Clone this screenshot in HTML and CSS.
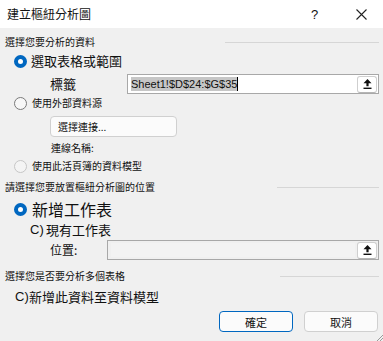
FILE: index.html
```html
<!DOCTYPE html>
<html lang="zh-Hant">
<head>
    <meta charset="UTF-8">
    <title>建立樞紐分析圖</title>
    <link rel="stylesheet" href="styles.css">
</head>
<body>
    <div class="dialog">
        <div class="titlebar">
            <span class="title">建立樞紐分析圖</span>
            <span class="help">?</span>
            <span class="close">
                <svg width="11" height="11" viewBox="0 0 11 11"><path d="M0.5 0.5L10.5 10.5M10.5 0.5L0.5 10.5" stroke="#222" stroke-width="1.1"/></svg>
            </span>
        </div>

        <div class="content">
            <div class="heading h1"><span>選擇您要分析的資料</span><i class="line line1"></i></div>

            <div class="row r1 big">
                <span class="radio on"></span><span class="rtext">選取表格或範圍</span>
            </div>
            <div class="row field f1">
                <span class="flabel">標籤</span>
                <div class="input">
                    <span class="value"><span class="sel">Sheet1!$D$24:$G$35</span><span class="caret"></span></span>
                    <span class="pick">
                        <svg width="9" height="10" viewBox="0 0 9 10"><path d="M4.5 0L8.5 4.2H5.6V7.2H3.4V4.2H0.5Z" fill="#111"/><rect x="0.5" y="8.6" width="8" height="1.4" fill="#111"/></svg>
                    </span>
                </div>
            </div>
            <div class="row r2 small">
                <span class="radio"></span><span class="rtext">使用外部資料源</span>
            </div>
            <div class="row connrow">
                <button class="connbtn">選擇連接...</button>
            </div>
            <div class="row conname">連線名稱:</div>
            <div class="row r3 small">
                <span class="radio off"></span><span class="rtext">使用此活頁簿的資料模型</span>
            </div>

            <div class="heading h2"><span>請選擇您要放置樞紐分析圖的位置</span><i class="line line2"></i></div>

            <div class="row r4 huge">
                <span class="radio on"></span><span class="rtext">新增工作表</span>
            </div>
            <div class="row r5 mid">
                <span class="cmark">C)</span><span class="rtext">現有工作表</span>
            </div>
            <div class="row field f2">
                <span class="flabel">位置:</span>
                <div class="input dis">
                    <span class="value"></span>
                    <span class="pick">
                        <svg width="9" height="10" viewBox="0 0 9 10"><path d="M4.5 0L8.5 4.2H5.6V7.2H3.4V4.2H0.5Z" fill="#111"/><rect x="0.5" y="8.6" width="8" height="1.4" fill="#111"/></svg>
                    </span>
                </div>
            </div>

            <div class="heading h3"><span>選擇您是否要分析多個表格</span><i class="line line3"></i></div>

            <div class="row r6 mid">
                <span class="cmark2">C)</span><span>新增此資料至資料模型</span>
            </div>

            <div class="buttons">
                <button class="btn primary">確定</button>
                <button class="btn">取消</button>
            </div>
        </div>

        <svg class="grip" width="7" height="7" viewBox="0 0 7 7"><path d="M7 1L1 7M7 4L4 7" stroke="#9a9a9a" stroke-width="1"/></svg>
    </div>
</body>
</html>
```

FILE: styles.css
```css
*{
    padding: 0;
    margin: 0;
    box-sizing: border-box;
}
body{
    width: 383px;
    height: 341px;
    overflow: hidden;
    background: #f0f0f0;
    font-family: "Noto Sans CJK TC", "Noto Sans", sans-serif;
    color: #111;
}
.dialog{
    width: 383px;
    height: 341px;
    position: relative;
    background: #f0f0f0;
}
.titlebar{
    height: 28px;
    background: #fff;
    display: flex;
    align-items: center;
    padding-left: 7px;
}
.title{
    font-size: 12px;
    line-height: 16px;
    flex: 1;
}
.help{
    font-family: "Liberation Sans", sans-serif;
    font-size: 13px;
    width: 8px;
    margin-right: 37px;
}
.close{
    display: flex;
    width: 11px;
    margin-right: 16px;
}
.content{
    padding: 0 4px 0 5px;
}
.heading{
    display: flex;
    align-items: center;
    height: 18px;
    font-size: 10px;
    line-height: 14px;
}
.line{
    margin-left: auto;
    height: 1px;
    background: #d6d6d6;
}
.line1{ width: 154px; }
.line2{ width: 102px; }
.line3{ width: 99px; }
.h1{ margin-top: 5px; }
.h2{ margin-top: 3px; }
.h3{ margin-top: 7px; }

.row{
    display: flex;
    align-items: center;
}
.radio{
    width: 13px;
    height: 13px;
    border-radius: 50%;
    border: 1px solid #7a7a7a;
    background: #f7f7f7;
    margin-left: 9px;
    flex: none;
}
.radio.on{
    border: 4px solid #0067c0;
    background: #fff;
}
.radio.off{
    border-color: #c6c6c6;
    background: #f4f4f4;
}
.r1{ height: 20px; }
.r1 .rtext{ font-size: 13px; line-height: 18px; margin-left: 4px; }
.small .rtext{ font-size: 10px; line-height: 14px; margin-left: 5px; }
.r2{ height: 14px; margin-top: 2px; }
.r3{ height: 18px; margin-top: 1px; }
.r4{ height: 22px; margin-top: 2px; }
.r4 .rtext{ font-size: 16px; line-height: 22px; margin-left: 5px; }
.r5{ height: 16px; margin-top: 2px; }
.cmark{
    font-family: "Liberation Sans", sans-serif;
    font-size: 13px;
    line-height: 16px;
    margin-left: 25px;
    width: 16px;
}
.mid .rtext{ font-size: 13px; line-height: 16px; }
.r6{ height: 20px; margin-top: 2px; font-size: 13px; line-height: 18px; }
.cmark2{
    font-family: "Liberation Sans", sans-serif;
    font-size: 13px;
    margin-left: 10px;
    width: 14px;
}

.field{
    height: 20px;
}
.f1{ margin-top: 3px; }
.f2{ margin-top: 2px; }
.flabel{
    margin-left: 45px;
    font-size: 13px;
    line-height: 18px;
}
.f1 .flabel{ width: 77px; }
.f2 .flabel{ width: 57px; font-size: 12px; }
.input{
    flex: 1;
    height: 20px;
    border: 1px solid #a8a8a8;
    background: #fff;
    display: flex;
    align-items: center;
    padding: 0 1px 0 3px;
}
.input.dis{
    background: #f0f0f0;
}
.value{
    flex: 1;
    display: flex;
    align-items: center;
    height: 14px;
}
.dis .value{
    background: #f3f3f3;
    margin-right: 2px;
}
.sel{
    font-family: "Liberation Sans", sans-serif;
    font-size: 11px;
    line-height: 14px;
    background: #c6c6c6;
}
.caret{
    width: 1px;
    height: 14px;
    background: #000;
}
.pick{
    width: 20px;
    height: 17px;
    background: #fff;
    border: 1px solid #cfcfcf;
    border-bottom-color: #b5b5b5;
    border-radius: 3px;
    display: flex;
    align-items: center;
    justify-content: center;
}
.connrow{
    margin-top: 6px;
    height: 21px;
}
.connbtn{
    margin-left: 45px;
    width: 127px;
    height: 21px;
    border: 1px solid #d0d0d0;
    border-radius: 4px;
    background: #fbfbfb;
    font-family: "Noto Sans CJK TC", sans-serif;
    font-size: 10px;
    text-align: left;
    padding-left: 7px;
    color: #111;
}
.conname{
    height: 16px;
    margin-top: 3px;
    margin-left: 46px;
    font-size: 10px;
    line-height: 14px;
}

.buttons{
    display: flex;
    justify-content: flex-end;
    gap: 11px;
    margin-top: 4px;
    padding-right: 1px;
}
.btn{
    width: 74px;
    height: 21px;
    border: 1px solid #d0d0d0;
    border-radius: 4px;
    background: #fbfbfb;
    font-family: "Noto Sans CJK TC", sans-serif;
    font-size: 11px;
    color: #111;
}
.btn.primary{
    border-color: #0067c0;
}
.grip{
    position: absolute;
    right: 0;
    bottom: 0;
}
```
